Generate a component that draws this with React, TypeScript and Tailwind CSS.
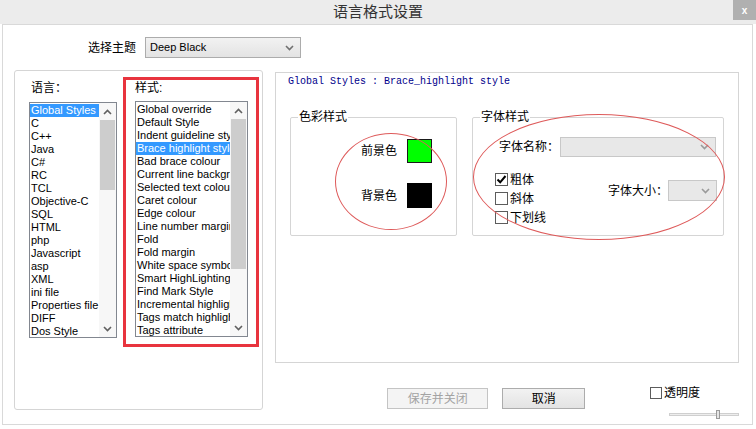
import React from "react";

const langs = [
  "Global Styles",
  "C",
  "C++",
  "Java",
  "C#",
  "RC",
  "TCL",
  "Objective-C",
  "SQL",
  "HTML",
  "php",
  "Javascript",
  "asp",
  "XML",
  "ini file",
  "Properties file",
  "DIFF",
  "Dos Style",
];

const styles = [
  "Global override",
  "Default Style",
  "Indent guideline style",
  "Brace highlight style",
  "Bad brace colour",
  "Current line background colour",
  "Selected text colour",
  "Caret colour",
  "Edge colour",
  "Line number margin",
  "Fold",
  "Fold margin",
  "White space symbol",
  "Smart HighLighting",
  "Find Mark Style",
  "Incremental highlight all",
  "Tags match highlighting",
  "Tags attribute",
];

const Chevron = ({ up, className }: { up?: boolean; className?: string }) => (
  <svg width="9" height="6" viewBox="0 0 9 6" className={className}>
    <path
      d={up ? "M1 5 L4.5 1.5 L8 5" : "M1 1 L4.5 4.5 L8 1"}
      fill="none"
      stroke="currentColor"
      strokeWidth="1.6"
    />
  </svg>
);

interface ListProps {
  items: string[];
  selected: number;
  className: string;
  thumb: string;
}

const ListBox = ({ items, selected, className, thumb }: ListProps) => (
  <div className={`flex h-[236px] border border-[#828790] bg-white ${className}`}>
    <div className="flex-1 overflow-hidden pt-[1px]">
      {items.map((item, i) => (
        <div
          key={item}
          className={`h-[13px] leading-[13px] pl-[1px] text-[11px] whitespace-nowrap ${
            i === selected ? "bg-[#3399ff] text-white" : "text-black"
          }`}
        >
          {item}
        </div>
      ))}
    </div>
    <div className="w-[17px] flex flex-col bg-[#f7f7f7]">
      <div className="h-[17px] flex items-center justify-center text-[#606060]">
        <Chevron up />
      </div>
      <div className={`mx-[1px] bg-[#cdcdcd] ${thumb}`} />
      <div className="flex-1" />
      <div className="h-[17px] flex items-center justify-center text-[#606060]">
        <Chevron />
      </div>
    </div>
  </div>
);

const Select = ({ text, className, disabled }: { text?: string; className: string; disabled?: boolean }) => (
  <div
    className={`flex items-center justify-between pl-[4px] pr-[6px] border ${
      disabled
        ? "border-[#c8c8c8] bg-[#e8e8e8] text-[#9a9a9a]"
        : "border-[#acacac] bg-gradient-to-b from-[#f2f2f2] to-[#e3e3e3] text-[#707070]"
    } ${className}`}
  >
    <span className="text-[11px] text-black">{text}</span>
    <Chevron />
  </div>
);

const Group = ({ title, className, children }: { title: string; className: string; children: React.ReactNode }) => (
  <div className={`relative border border-[#d5d5d5] rounded-[2px] ${className}`}>
    <span className="absolute top-[-8px] left-[7px] bg-white px-[1px] text-[12px] leading-[14px]">{title}</span>
    {children}
  </div>
);

const Check = ({ checked, label, box = "w-[13px] h-[13px]" }: { checked?: boolean; label: string; box?: string }) => (
  <div className="flex items-center h-[19px]">
    <div className={`border border-[#5c5c5c] bg-white flex items-center justify-center ${box}`}>
      {checked && (
        <svg width="11" height="11" viewBox="0 0 11 11">
          <path d="M1.5 5.5 L4.2 8.3 L9.5 2" fill="none" stroke="#000" strokeWidth="2" />
        </svg>
      )}
    </div>
    <span className="ml-[2px] text-[12px] leading-[14px]">{label}</span>
  </div>
);

export default function App() {
  return (
    <div className="w-[756px] h-[429px] bg-white flex flex-col overflow-hidden font-['Liberation_Sans','Noto_Sans_CJK_SC',sans-serif] text-black">
      <div className="h-[24px] shrink-0 bg-[#ececec] flex items-start">
        <div className="w-[23px]" />
        <div className="flex-1 text-center text-[15px] leading-[22px] text-[#333] font-['Noto_Sans_CJK_SC',sans-serif]">
          语言格式设置
        </div>
        <div className="w-[23px] h-[20px] bg-[#b0b0b0] text-white flex items-center justify-center text-[10px] font-bold">
          x
        </div>
      </div>

      <div className="ml-[2px] w-[751px] h-[401px] border border-[#d9d9d9] flex flex-col">
        <div className="pt-[12px] pl-[85px] flex items-center">
          <span className="text-[12px] leading-[14px]">选择主题</span>
          <Select text="Deep Black" className="ml-[9px] w-[156px] h-[21px]" />
        </div>

        <div className="mt-[12px] ml-[11px] flex items-start">
          <div className="w-[249px] h-[340px] border border-[#d5d5d5] rounded-[3px] flex items-start pl-[14px]">
            <div className="pt-[10px]">
              <div className="pl-[2px] text-[12px] leading-[14px]">语言：</div>
              <ListBox items={langs} selected={0} className="mt-[7px] w-[88px]" thumb="h-[70px]" />
            </div>
            <div className="ml-[6px] mt-[6px] w-[136px] h-[270px] border-[3px] border-[#e8343e] pl-[9px] pt-[1px]">
              <div className="text-[12px] leading-[14px]">样式:</div>
              <ListBox items={styles} selected={3} className="mt-[6px] w-[113px]" thumb="h-[150px]" />
            </div>
          </div>

          <div className="ml-[12px] w-[464px] flex flex-col">
            <div className="mt-[2px] h-[291px] border border-[#d5d5d5]">
              <div className="pl-[12px] pt-[3px] font-['Liberation_Mono',monospace] text-[10px] leading-[12px] text-[#00008b] whitespace-pre">
                Global Styles : Brace_highlight style
              </div>
              <div className="mt-[29px] pl-[14px] flex gap-[15px]">
                <Group title="色彩样式" className="w-[167px] h-[119px] pl-[70px] pt-[21px]">
                  <div className="absolute left-[44px] top-[15px] w-[112px] h-[97px] rounded-[50%] border border-[#de5a5a]" />
                  <div className="flex items-center">
                    <span className="text-[12px] leading-[14px]">前景色</span>
                    <div className="ml-[10px] w-[25px] h-[24px] bg-[#00ff00] border border-[#1a1a1a]" />
                  </div>
                  <div className="mt-[20px] flex items-center">
                    <span className="text-[12px] leading-[14px]">背景色</span>
                    <div className="ml-[10px] w-[25px] h-[25px] bg-black" />
                  </div>
                </Group>
                <Group title="字体样式" className="w-[252px] h-[119px] pt-[19px]">
                  <div className="absolute left-[0px] top-[-4px] w-[252px] h-[126px] rounded-[50%] border border-[#de5a5a]" />
                  <div className="pl-[26px] flex items-center">
                    <span className="text-[12px] leading-[14px]">字体名称：</span>
                    <Select className="ml-[1px] w-[156px] h-[20px]" disabled />
                  </div>
                  <div className="mt-[13px] pl-[22px] flex items-start">
                    <div>
                      <Check checked label="粗体" />
                      <Check label="斜体" />
                      <Check label="下划线" />
                    </div>
                    <div className="ml-auto mr-[6px] mt-[10px] flex items-center">
                      <span className="text-[12px] leading-[14px]">字体大小：</span>
                      <Select className="w-[49px] h-[21px]" disabled />
                    </div>
                  </div>
                </Group>
              </div>
            </div>

            <div className="mt-[25px] pl-[112px] flex items-start">
              <div className="w-[102px] h-[21px] border border-[#c4c4c4] bg-[#f4f4f4] text-[#a3a3a3] text-[12px] flex items-center justify-center">
                保存并关闭
              </div>
              <div className="ml-[14px] w-[83px] h-[21px] border border-[#acacac] bg-gradient-to-b from-[#f2f2f2] to-[#e3e3e3] text-[12px] flex items-center justify-center">
                取消
              </div>
              <div className="ml-[65px] mt-[-5px] flex flex-col">
                <Check label="透明度" box="w-[12px] h-[12px]" />
                <div className="ml-[19px] mt-[8px] w-[70px] h-[9px] relative flex items-center">
                  <div className="w-full h-[3px] border border-[#cfcfcf] bg-[#ededed]" />
                  <div className="absolute left-[47px] top-0 w-[4px] h-[9px] border border-[#9a9a9a] bg-[#e5e5e5]" />
                </div>
              </div>
            </div>
          </div>
        </div>
      </div>
    </div>
  );
}
